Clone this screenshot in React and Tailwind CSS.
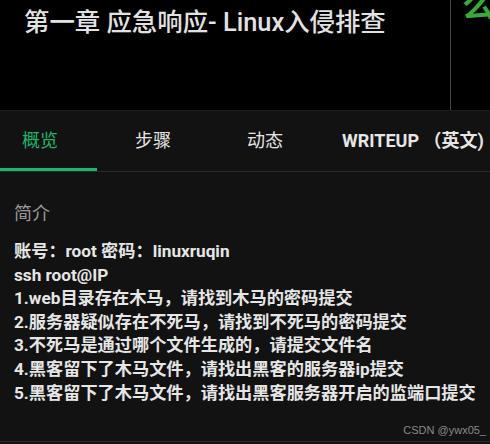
import React from "react";

const tabs = ["概览", "步骤", "动态", "WRITEUP （英文)"];

const lines = [
  "账号：root 密码：linuxruqin",
  "ssh root@IP",
  "1.web目录存在木马，请找到木马的密码提交",
  "2.服务器疑似存在不死马，请找到不死马的密码提交",
  "3.不死马是通过哪个文件生成的，请提交文件名",
  "4.黑客留下了木马文件，请找出黑客的服务器ip提交",
  "5.黑客留下了木马文件，请找出黑客服务器开启的监端口提交",
];

export default function App() {
  return (
    <div
      className="w-[490px] h-[444px] overflow-hidden bg-[#121212]"
      style={{ fontFamily: "Roboto, 'Noto Sans CJK SC', sans-serif" }}
    >
      {/* Cabecera */}
      <div className="relative h-[110px] bg-black flex overflow-hidden">
        <h1 className="flex-1 pl-6 pt-[5px] text-[25.4px] leading-[34px] text-[#e2e2e2] font-medium whitespace-nowrap">
          第一章 应急响应- Linux入侵排查
        </h1>
        <div className="w-px h-full bg-[#444] mr-[39px]" />
        <span className="absolute right-[-4px] top-[-18px] text-[32px] text-[#3aa83a] font-bold">
          么
        </span>
      </div>

      {/* Tabs */}
      <div className="h-[62px] border-t border-[#1e1e1e] border-b border-b-[#2a2a2a] flex items-end">
        {tabs.map((t, i) => (
          <div
            key={t}
            className={
              i === 0
                ? "w-[97px] h-full pl-[22px] flex items-center border-b-[3px] border-[#1db56c] text-[#1db56c] text-[18px] pt-[2px]"
                : i === 1
                ? "ml-[38px] h-full flex items-center text-[#e6e6e6] text-[18px] pb-[1px]"
                : i === 2
                ? "ml-[76px] h-full flex items-center text-[#e6e6e6] text-[18px] pb-[1px]"
                : "ml-[59px] h-full flex items-center text-[#e6e6e6] text-[18px] font-bold pb-[1px] whitespace-nowrap"
            }
          >
            {t}
          </div>
        ))}
      </div>

      {/* Contenido */}
      <div className="relative h-[270px] px-[14px] pt-[30px] border-b border-[#2a2a2a]">
        <div className="text-[18px] leading-[24px] text-[#9a9a9a]">简介</div>
        <div className="mt-[14px] text-[17.2px] leading-[23.6px] text-[#e6e6e6] font-bold whitespace-nowrap">
          {lines.map((l) => (
            <div key={l}>{l}</div>
          ))}
        </div>
        <span
          className="absolute right-[4px] bottom-[3px] text-[11px] text-[#8a8a8a]"
          style={{ fontFamily: "'Liberation Sans', sans-serif" }}
        >
          CSDN @ywx05_
        </span>
      </div>
    </div>
  );
}
